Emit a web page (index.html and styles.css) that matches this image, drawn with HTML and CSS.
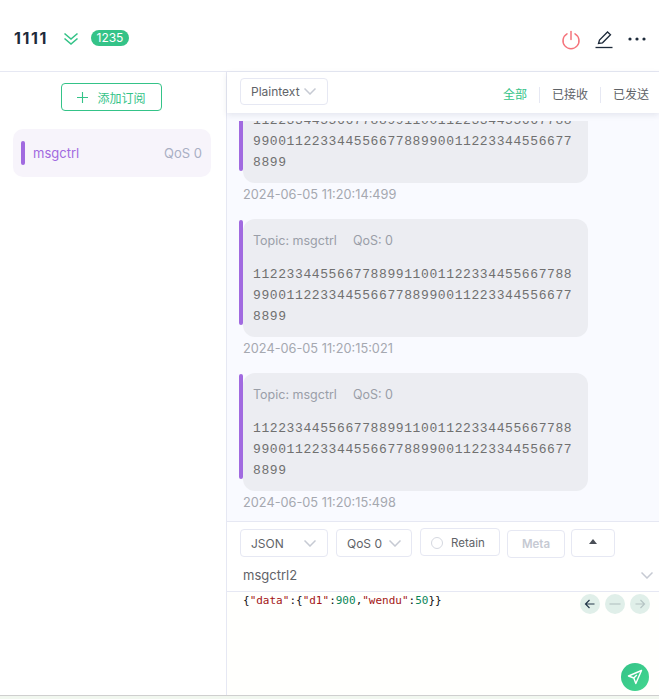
FILE: index.html
```html
<!DOCTYPE html>
<html lang="en">
<head>
  <meta charset="UTF-8">
  <meta name="viewport" content="width=device-width, initial-scale=1.0">
  <title>MQTT Client</title>
  <link rel="stylesheet" href="styles.css">
</head>
<body>
  <div class="app">
    <header class="topbar">
      <div class="conn">
        <span class="conn-name">1111</span>
        <svg class="chevrons" width="16" height="14" viewBox="0 0 16 14" fill="none" stroke="#34c388" stroke-width="1.6">
          <path d="M1.5 1.5 8 7l6.5-5.5"/>
          <path d="M1.5 6.5 8 12l6.5-5.5"/>
        </svg>
        <span class="badge">1235</span>
      </div>
      <div class="actions">
        <svg width="20" height="20" viewBox="0 0 20 20" fill="none" stroke="#f5737b" stroke-width="1.5" stroke-linecap="round">
          <path d="M6 3.8a8 8 0 1 0 8 0"/>
          <path d="M10 1.5v8"/>
        </svg>
        <svg width="20" height="20" viewBox="0 0 20 20" fill="none" stroke="#1d2a3a" stroke-width="1.3">
          <path d="M4.5 13.5 5.5 10 13.5 2l3 2.8-8 8z"/>
          <path d="M1.5 17.5h17"/>
        </svg>
        <svg width="20" height="20" viewBox="0 0 20 20" fill="#1d2a3a">
          <circle cx="3" cy="9" r="1.6"/>
          <circle cx="10" cy="9" r="1.6"/>
          <circle cx="17" cy="9" r="1.6"/>
        </svg>
      </div>
    </header>

    <div class="main">
      <aside class="sidebar">
        <button class="add-btn" type="button">
          <svg class="plus" width="11" height="11" viewBox="0 0 11 11" fill="none" stroke="#34c388" stroke-width="1.1"><path d="M5.5 0v11M0 5.5h11"/></svg>
          添加订阅
        </button>
        <div class="sub-item">
          <span class="sub-mark"></span>
          <span class="sub-name">msgctrl</span>
          <span class="sub-qos">QoS 0</span>
        </div>
      </aside>

      <section class="content">
        <div class="toolbar">
          <div class="select select-plain">Plaintext<svg class="caret" width="12" height="7" viewBox="0 0 12 7"><path d="M.5.5 6 6 11.5.5"/></svg></div>
          <div class="tabs">
            <span class="tab tab-active">全部</span>
            <span class="tab">已接收</span>
            <span class="tab">已发送</span>
          </div>
        </div>

        <div class="messages">
          <div class="msg-list">
            <div class="msg">
              <div class="bubble">
                <pre class="payload">11223344556677889911001122334455667788
99001122334455667788990011223344556677
8899</pre>
              </div>
              <div class="time">2024-06-05 11:20:14:499</div>
            </div>
            <div class="msg">
              <div class="bubble">
                <div class="meta"><span>Topic: msgctrl</span><span>QoS: 0</span></div>
                <pre class="payload">11223344556677889911001122334455667788
99001122334455667788990011223344556677
8899</pre>
              </div>
              <div class="time">2024-06-05 11:20:15:021</div>
            </div>
            <div class="msg">
              <div class="bubble">
                <div class="meta"><span>Topic: msgctrl</span><span>QoS: 0</span></div>
                <pre class="payload">11223344556677889911001122334455667788
99001122334455667788990011223344556677
8899</pre>
              </div>
              <div class="time">2024-06-05 11:20:15:498</div>
            </div>
          </div>
        </div>

        <div class="composer">
          <div class="composer-opts">
            <div class="select select-json">JSON<svg class="caret" width="12" height="7" viewBox="0 0 12 7"><path d="M.5.5 6 6 11.5.5"/></svg></div>
            <div class="select select-qos">QoS 0<svg class="caret" width="12" height="7" viewBox="0 0 12 7"><path d="M.5.5 6 6 11.5.5"/></svg></div>
            <div class="retain"><span class="radio"></span>Retain</div>
            <div class="meta-btn">Meta</div>
            <div class="up-btn"><span class="up-arrow"></span></div>
          </div>
          <div class="topic-row">
            <span>msgctrl2</span>
            <svg class="caret" width="12" height="7" viewBox="0 0 12 7"><path d="M.5.5 6 6 11.5.5"/></svg>
          </div>
          <div class="editor">
            <code class="code"><span class="p">{</span><span class="s">"data"</span><span class="p">:{</span><span class="s">"d1"</span><span class="p">:</span><span class="n">900</span><span class="p">,</span><span class="s">"wendu"</span><span class="p">:</span><span class="n">50</span><span class="p">}}</span></code>
            <div class="history">
              <span class="hist-btn"><svg width="12" height="12" viewBox="0 0 12 12" fill="none" stroke="#24384a" stroke-width="1.2"><path d="M10.5 6h-9M5.5 2 1.5 6l4 4"/></svg></span>
              <span class="hist-btn"><svg width="12" height="12" viewBox="0 0 12 12" fill="none" stroke="#b5c4c4" stroke-width="1.2"><path d="M.5 6h11"/></svg></span>
              <span class="hist-btn"><svg width="12" height="12" viewBox="0 0 12 12" fill="none" stroke="#b5c4c4" stroke-width="1.2"><path d="M1.5 6h9M6.5 2l4 4-4 4"/></svg></span>
            </div>
            <button class="send-btn" type="button">
              <svg width="16" height="16" viewBox="0 0 16 16" fill="none" stroke="#fff" stroke-width="1.4" stroke-linejoin="round"><path d="M14.5 1.5 1.5 7l5.3 2 2 5.5z"/><path d="M6.8 9l3-3"/></svg>
            </button>
          </div>
        </div>
      </section>
    </div>
  </div>
  <div class="bottom-strip"></div>
</body>
</html>
```

FILE: styles.css
```css
* {
  box-sizing: border-box;
}

html, body {
  margin: 0;
  padding: 0;
  height: 699px;
  overflow: hidden;
}

body {
  font-family: Inter, "Noto Sans CJK SC", sans-serif;
  font-size: 12px;
  color: #5f6368;
  background-color: #fff;
}

.app {
  height: 695px;
  display: flex;
  flex-direction: column;
}

.bottom-strip {
  height: 4px;
  border-top: 1px solid #cfcfcf;
  background-color: #f1f7ef;
}

/* top bar */
.topbar {
  height: 72px;
  flex: none;
  display: flex;
  justify-content: space-between;
  align-items: center;
  padding: 5px 12px 0 14px;
  border-bottom: 1px solid #e6e8f3;
}

.conn {
  display: flex;
  align-items: center;
}

.conn-name {
  width: 49px;
  font-size: 16px;
  font-weight: 700;
  color: #1d2a3a;
  letter-spacing: 1.6px;
}

.chevrons {
  margin: 1px 12px 0 0;
}

.badge {
  background-color: #34c388;
  color: #fff;
  font-size: 12px;
  line-height: 16px;
  height: 16px;
  padding: 0 5.5px;
  border-radius: 8px;
}

.actions {
  display: flex;
  align-items: center;
  gap: 13px;
  margin-top: 3px;
}

/* layout */
.main {
  flex: 1;
  min-height: 0;
  display: flex;
}

.sidebar {
  width: 227px;
  flex: none;
  padding: 11px 15px 0 13px;
  border-right: 1px solid #e6e8f3;
  display: flex;
  flex-direction: column;
  align-items: center;
}

.add-btn {
  width: 101px;
  height: 28px;
  margin-right: 1px;
  padding: 0;
  font-family: inherit;
  font-size: 12px;
  color: #34c388;
  background-color: #fff;
  border: 1px solid #34c388;
  border-radius: 4px;
  display: flex;
  justify-content: center;
  align-items: center;
}

.plus {
  margin-right: 9px;
}

.sub-item {
  align-self: stretch;
  height: 48px;
  margin-top: 18px;
  padding: 0 9px 0 8px;
  background-color: #f7f4fb;
  border-radius: 10px;
  display: flex;
  align-items: center;
  font-size: 13px;
}

.sub-mark {
  width: 4px;
  height: 24px;
  border-radius: 2px;
  background-color: #a16ae0;
  margin-right: 8px;
}

.sub-name {
  flex: 1;
  color: #a16ae0;
}

.sub-qos {
  color: #a9afc4;
}

.content {
  flex: 1;
  min-width: 0;
  display: flex;
  flex-direction: column;
}

/* toolbar above the messages */
.toolbar {
  height: 41px;
  flex: none;
  padding: 6px 10px 0 13px;
  background-color: #fff;
  box-shadow: 0 2px 6px rgba(40, 50, 90, 0.1);
  display: flex;
  justify-content: space-between;
  position: relative;
  z-index: 1;
}

.select {
  height: 28px;
  border: 1px solid #e6e8f3;
  border-radius: 4px;
  display: flex;
  justify-content: space-between;
  align-items: center;
  color: #5f6368;
  background-color: #fff;
}

.caret {
  fill: none;
  stroke: #c6cad3;
  stroke-width: 1.5;
  flex: none;
}

.select-plain {
  width: 88px;
  height: 27px;
  padding: 0 11px 0 10px;
}

.tabs {
  display: flex;
  align-items: center;
  height: 28px;
  margin-top: 3px;
}

.tab {
  padding-left: 12px;
  margin-left: 12px;
  border-left: 1px solid #e6e8f3;
  line-height: 16px;
}

.tab-active {
  border-left: none;
  padding: 0;
  margin: 0;
  color: #34c388;
}

/* messages */
.messages {
  flex: 1;
  min-height: 0;
  background-color: #f9faff;
  padding-top: 8px;
  display: flex;
}

.msg-list {
  flex: 1;
  min-width: 0;
  overflow: hidden;
  display: flex;
  flex-direction: column;
  justify-content: flex-end;
  padding: 0 71px 10px 16px;
}

.msg {
  flex: none;
  margin-top: 16px;
}

.bubble {
  position: relative;
  background-color: #ecedf2;
  border-radius: 12px;
  padding: 12px 0 10px 10px;
}

.bubble::before {
  content: "";
  position: absolute;
  left: -4px;
  top: 1px;
  bottom: 12px;
  width: 4px;
  border-radius: 2px;
  background-color: #a16ae0;
}

.meta {
  display: flex;
  gap: 16px;
  font-size: 12.5px;
  line-height: 20px;
  color: #9a9ea8;
}

.payload {
  margin: 13px 0 0;
  font-family: "Liberation Mono", monospace;
  font-size: 13px;
  letter-spacing: 0.6px;
  line-height: 21px;
  color: #707070;
}

.time {
  margin-top: 3px;
  line-height: 17px;
  font-size: 12.75px;
  color: #a5a8b0;
}

/* composer */
.composer {
  height: 174px;
  flex: none;
  background-color: #fff;
  border-top: 1px solid #e6e8f3;
  display: flex;
  flex-direction: column;
}

.composer-opts {
  height: 35px;
  padding: 7px 0 0 13px;
  display: flex;
  align-items: flex-start;
  gap: 8px;
  flex: none;
}

.select-json {
  width: 88px;
  padding: 0 11px 0 10px;
}

.select-qos {
  width: 76px;
  padding: 0 10px 0 10px;
}

.retain {
  width: 80px;
  height: 28px;
  margin-top: -1px;
  padding: 2px 0 0 10px;
  border: 1px solid #e6e8f3;
  border-radius: 4px;
  display: flex;
  align-items: center;
  font-size: 11.5px;
}

.radio {
  width: 12px;
  height: 12px;
  border: 1px solid #d5d8e0;
  border-radius: 50%;
  margin-right: 8px;
}

.meta-btn {
  width: 58px;
  height: 28px;
  margin: 1px 0 0 -1px;
  border: 1px solid #e6e8f3;
  border-radius: 4px;
  text-align: center;
  line-height: 27px;
  font-size: 11.5px;
  font-weight: 600;
  color: #c6cad3;
}

.up-btn {
  width: 44px;
  height: 28px;
  margin-left: -2px;
  border: 1px solid #e6e8f3;
  border-radius: 4px;
  display: flex;
  justify-content: center;
  align-items: center;
}

.up-arrow {
  width: 0;
  height: 0;
  border-left: 4px solid transparent;
  border-right: 4px solid transparent;
  border-bottom: 5px solid #4a4f57;
  margin-bottom: 3px;
}

.topic-row {
  height: 35px;
  flex: none;
  padding: 1px 6px 0 16px;
  border-bottom: 1px solid #e6e8f3;
  display: flex;
  justify-content: space-between;
  align-items: center;
  font-size: 13px;
  color: #5f6368;
}

.topic-row .caret {
  margin-top: 2px;
}

.editor {
  flex: 1;
  position: relative;
  background-color: #fffffd;
  padding: 0 0 0 16px;
}

.code {
  font-family: "DejaVu Sans Mono", monospace;
  font-size: 11px;
  line-height: 15px;
}

.p { color: #111; }
.s { color: #a31515; }
.n { color: #098658; }

.history {
  position: absolute;
  top: 2px;
  right: 9px;
  display: flex;
  gap: 5px;
}

.hist-btn {
  width: 20px;
  height: 20px;
  border-radius: 50%;
  background-color: #e0efe9;
  display: flex;
  justify-content: center;
  align-items: center;
}

.send-btn {
  position: absolute;
  right: 10px;
  bottom: 4px;
  width: 28px;
  height: 28px;
  padding: 0;
  border: none;
  border-radius: 50%;
  background: linear-gradient(135deg, #34c388, #43d68f);
  display: flex;
  justify-content: center;
  align-items: center;
}
```
